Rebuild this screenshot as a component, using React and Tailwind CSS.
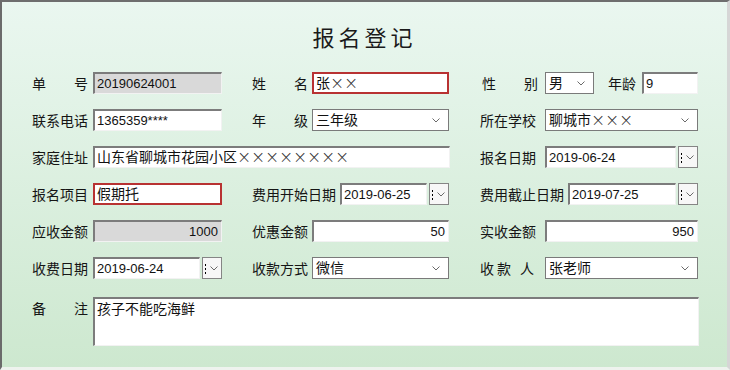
import React from "react";

const cjk = "font-['Noto_Sans_CJK_SC','Liberation_Sans',sans-serif]";
const field = "font-['Liberation_Sans','Noto_Sans_CJK_SC',sans-serif] text-[13px] text-[#111]";

function Chevron() {
  return (
    <svg width="8" height="5" viewBox="0 0 8 5" className="shrink-0">
      <polyline points="0.5,0.5 4,4 7.5,0.5" fill="none" stroke="#6a6a6a" strokeWidth="1" />
    </svg>
  );
}

// wide, thin cross as in the masked names
function Xs({ n }) {
  return (
    <>
      {Array.from({ length: n }).map((_, i) => (
        <span
          key={i}
          className="inline-block w-[14px] text-center font-['DejaVu_Sans',sans-serif] font-light text-[17px] leading-none text-[#333]"
        >
          ×
        </span>
      ))}
    </>
  );
}

function Label({ className, children }) {
  return (
    <div className={`${cjk} text-[14px] text-[#151515] shrink-0 flex items-center ${className}`}>
      {children}
    </div>
  );
}

// justified two-char label, like "单    号"
function Spread({ a, b }) {
  return (
    <span className="flex w-[56px] justify-between">
      <span>{a}</span>
      <span>{b}</span>
    </span>
  );
}

function Sunken({ className, children, gray, right, red }) {
  const border = red
    ? "border-2 border-[#b83232]"
    : "border-t-2 border-l-2 border-b border-r border-t-[#7c7c7c] border-l-[#7c7c7c] border-b-[#f2f2f2] border-r-[#f2f2f2]";
  return (
    <div
      className={`h-[22px] shrink-0 flex items-center px-[2px] ${border} ${gray ? "bg-[#d9d9d9]" : "bg-white"} ${right ? "justify-end pr-[3px]" : ""} ${field} ${className}`}
    >
      {children}
    </div>
  );
}

function Select({ className, children }) {
  return (
    <div
      className={`h-[22px] shrink-0 flex items-center justify-between pl-[3px] pr-[8px] border border-[#7a7a7a] bg-white ${field} text-[14px] ${className}`}
    >
      <span className="flex items-center">{children}</span>
      <Chevron />
    </div>
  );
}

function DateField({ inputW, value }) {
  return (
    <div className="flex items-center shrink-0">
      <Sunken className={inputW}>{value}</Sunken>
      <div className="ml-[2px] w-[20px] h-[22px] border border-[#858585] bg-[#f7f7f7] flex items-center relative">
        <span className="absolute left-[2px] top-[6px] flex flex-col gap-[2px]">
          <span className="w-px h-[2px] bg-black" />
          <span className="w-px h-[2px] bg-black" />
          <span className="w-px h-[2px] bg-black" />
        </span>
        <span className="ml-[7px]">
          <Chevron />
        </span>
      </div>
    </div>
  );
}

export default function App() {
  return (
    <div className="w-[730px] h-[370px] overflow-hidden bg-linear-to-b from-[#eaf7f0] to-[#cde8cf] border-t-2 border-l-2 border-t-[#6e6e6e] border-l-[#6b6b6b] border-r-[3px] border-r-[#d6d6d6] border-b-[3px] border-b-[#eef3ee]">
      <div className="h-[70px] pt-[19px]">
        <div className={`${cjk} text-center text-[22px] leading-[30px] tracking-[4px] text-[#1a1a1a]`}>
          报名登记
        </div>
      </div>

      <div className="flex flex-col gap-[15px] pl-[30px]">
        {/* row 1 */}
        <div className="grid grid-cols-[220px_228px_1fr] h-[22px]">
          <div className="flex">
            <Label className="w-[61px]"><Spread a="单" b="号" /></Label>
            <Sunken gray className="w-[129px]">20190624001</Sunken>
          </div>
          <div className="flex">
            <Label className="w-[60px]"><Spread a="姓" b="名" /></Label>
            <Sunken red className="w-[137px] text-[14px]">张<Xs n={2} /></Sunken>
          </div>
          <div className="flex">
            <Label className="w-[65px] pl-[2px]"><Spread a="性" b="别" /></Label>
            <Select className="w-[49px]">男</Select>
            <Label className="w-[34px] ml-[14px]">年龄</Label>
            <Sunken className="w-[56px]">9</Sunken>
          </div>
        </div>

        {/* row 2 */}
        <div className="grid grid-cols-[220px_228px_1fr] h-[22px]">
          <div className="flex">
            <Label className="w-[61px]">联系电话</Label>
            <Sunken className="w-[129px]">1365359****</Sunken>
          </div>
          <div className="flex">
            <Label className="w-[60px]"><Spread a="年" b="级" /></Label>
            <Select className="w-[137px]">三年级</Select>
          </div>
          <div className="flex">
            <Label className="w-[65px]">所在学校</Label>
            <Select className="w-[153px]">聊城市<Xs n={3} /></Select>
          </div>
        </div>

        {/* row 3 */}
        <div className="grid grid-cols-[448px_1fr] h-[22px]">
          <div className="flex">
            <Label className="w-[61px]">家庭住址</Label>
            <Sunken className="w-[357px] text-[14px]">山东省聊城市花园小区<Xs n={8} /></Sunken>
          </div>
          <div className="flex">
            <Label className="w-[65px]">报名日期</Label>
            <DateField inputW="w-[131px]" value="2019-06-24" />
          </div>
        </div>

        {/* row 4 */}
        <div className="grid grid-cols-[220px_228px_1fr] h-[22px]">
          <div className="flex">
            <Label className="w-[61px]">报名项目</Label>
            <Sunken red className="w-[129px] text-[14px]">假期托</Sunken>
          </div>
          <div className="flex">
            <Label className="w-[88px]">费用开始日期</Label>
            <DateField inputW="w-[87px]" value="2019-06-25" />
          </div>
          <div className="flex">
            <Label className="w-[88px]">费用截止日期</Label>
            <DateField inputW="w-[108px]" value="2019-07-25" />
          </div>
        </div>

        {/* row 5 */}
        <div className="grid grid-cols-[220px_228px_1fr] h-[22px]">
          <div className="flex">
            <Label className="w-[61px]">应收金额</Label>
            <Sunken gray right className="w-[129px]">1000</Sunken>
          </div>
          <div className="flex">
            <Label className="w-[60px]">优惠金额</Label>
            <Sunken right className="w-[137px]">50</Sunken>
          </div>
          <div className="flex">
            <Label className="w-[65px]">实收金额</Label>
            <Sunken right className="w-[153px]">950</Sunken>
          </div>
        </div>

        {/* row 6 */}
        <div className="grid grid-cols-[220px_228px_1fr] h-[22px]">
          <div className="flex">
            <Label className="w-[61px]">收费日期</Label>
            <DateField inputW="w-[107px]" value="2019-06-24" />
          </div>
          <div className="flex">
            <Label className="w-[60px]">收款方式</Label>
            <Select className="w-[137px]">微信</Select>
          </div>
          <div className="flex">
            <Label className="w-[65px]">
              <span>收</span>
              <span className="ml-[3px]">款</span>
              <span className="ml-[9px]">人</span>
            </Label>
            <Select className="w-[153px]">张老师</Select>
          </div>
        </div>

        {/* row 7 */}
        <div className="flex mt-[3px]">
          <Label className="w-[61px] items-start pt-[1px] h-[22px]"><Spread a="备" b="注" /></Label>
          <div className={`w-[606px] h-[49px] bg-white border-t-2 border-l-2 border-b border-r border-t-[#7c7c7c] border-l-[#7c7c7c] border-b-[#f2f2f2] border-r-[#f2f2f2] px-[2px] pt-[1px] ${field} text-[14px] leading-[18px]`}>
            孩子不能吃海鲜
          </div>
        </div>
      </div>
    </div>
  );
}
